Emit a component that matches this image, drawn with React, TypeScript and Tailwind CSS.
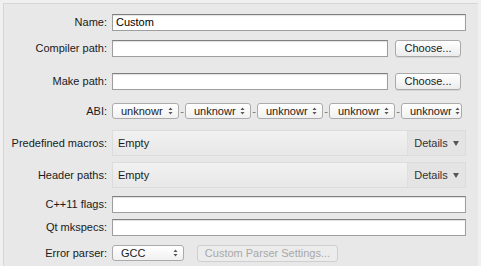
import React from "react";

const font = { fontFamily: '"Lucida Grande", "Liberation Sans", Arial, sans-serif' };

const Label = ({ children }: { children: React.ReactNode }) => (
  <div className="w-[103px] shrink-0 text-right text-[11px] text-[#1a1a1a]">{children}</div>
);

const Input = ({ value, className = "" }: { value?: string; className?: string }) => (
  <div
    className={`h-[17px] border border-[#9e9e9e] border-t-[#7f7f7f] bg-white px-[3px] text-[11px] leading-[15px] text-black shadow-[inset_0_1px_1px_rgba(0,0,0,0.12)] ${className}`}
  >
    {value}
  </div>
);

const Button = ({ children, disabled = false, className = "" }: { children: React.ReactNode; disabled?: boolean; className?: string }) => (
  <div
    className={`flex h-[17px] items-center justify-center rounded-[3px] border text-[11px] ${
      disabled
        ? "border-[#cfcfcf] bg-[#ececec] text-[#a8a8a8]"
        : "border-[#a9a9a9] bg-gradient-to-b from-white to-[#ececec] text-[#1a1a1a] shadow-[0_1px_0_rgba(0,0,0,0.08)]"
    } ${className}`}
  >
    {children}
  </div>
);

const Arrows = () => (
  <svg width="5" height="8" viewBox="0 0 5 8" className="shrink-0">
    <path d="M2.5 0.5 L4.5 3 L0.5 3 Z" fill="#555" />
    <path d="M2.5 7.5 L4.5 5 L0.5 5 Z" fill="#555" />
  </svg>
);

const Combo = ({ value, className = "" }: { value: string; className?: string }) => (
  <div
    className={`flex h-[16px] items-center justify-between gap-[3px] overflow-hidden rounded-[3px] border border-[#ababab] bg-gradient-to-b from-white to-[#f1f1f1] pl-[8px] pr-[5px] text-[11px] text-[#1a1a1a] ${className}`}
  >
    <span className="whitespace-nowrap">{value}</span>
    <Arrows />
  </div>
);

const Dash = () => <span className="w-[6px] text-center text-[11px] text-[#777]">-</span>;

const Details = () => (
  <div className="flex h-[26px] w-[354px] items-stretch border border-[#dcdcdc] bg-gradient-to-b from-[#f1f1f1] to-[#e8e8e8] text-[11px]">
    <div className="flex flex-1 items-center pl-[5px] text-[#1a1a1a]">Empty</div>
    <div className="flex w-[58px] items-center justify-center gap-[5px] border-l border-[#dedede] bg-[#e4e4e4] text-[#333]">
      <span>Details</span>
      <svg width="6" height="5" viewBox="0 0 6 5">
        <path d="M0 0 H6 L3 5 Z" fill="#555" />
      </svg>
    </div>
  </div>
);

export default function App() {
  return (
    <div style={font} className="h-[266px] w-[481px] overflow-hidden bg-[#f0f0f0] pl-[3px] pt-[3px]">
      <div className="h-[270px] w-[475px] border-l border-t border-[#d6d6d6] bg-[#e8e8e8] pt-[10px]">
        <div className="flex h-[17px] items-center gap-[5px]">
          <Label>Name:</Label>
          <Input value="Custom" className="w-[354px]" />
        </div>
        <div className="mt-[9px] flex h-[17px] items-center gap-[5px]">
          <Label>Compiler path:</Label>
          <Input className="w-[276px]" />
          <Button className="ml-[2px] w-[66px]">Choose...</Button>
        </div>
        <div className="mt-[16px] flex h-[17px] items-center gap-[5px]">
          <Label>Make path:</Label>
          <Input className="w-[276px]" />
          <Button className="ml-[2px] w-[66px]">Choose...</Button>
        </div>
        <div className="mt-[13px] flex h-[16px] items-center gap-[5px]">
          <Label>ABI:</Label>
          <div className="flex items-center">
            <Combo value="unknowr" className="w-[67px]" />
            <Dash />
            <Combo value="unknowr" className="w-[66px]" />
            <Dash />
            <Combo value="unknowr" className="w-[66px]" />
            <Dash />
            <Combo value="unknowr" className="w-[66px]" />
            <Dash />
            <Combo value="unknowr" className="w-[61px]" />
          </div>
        </div>
        <div className="mt-[11px] flex h-[26px] items-center gap-[5px]">
          <Label>Predefined macros:</Label>
          <Details />
        </div>
        <div className="mt-[6px] flex h-[26px] items-center gap-[5px]">
          <Label>Header paths:</Label>
          <Details />
        </div>
        <div className="mt-[8px] flex h-[16px] items-center gap-[5px]">
          <Label>C++11 flags:</Label>
          <Input className="h-[16px] w-[354px]" />
        </div>
        <div className="mt-[7px] flex h-[16px] items-center gap-[5px]">
          <Label>Qt mkspecs:</Label>
          <Input className="h-[16px] w-[354px]" />
        </div>
        <div className="mt-[10px] flex h-[16px] items-center gap-[5px]">
          <Label>Error parser:</Label>
          <Combo value="GCC" className="w-[72px]" />
          <Button disabled className="ml-[8px] w-[141px]">Custom Parser Settings...</Button>
        </div>
      </div>
    </div>
  );
}
